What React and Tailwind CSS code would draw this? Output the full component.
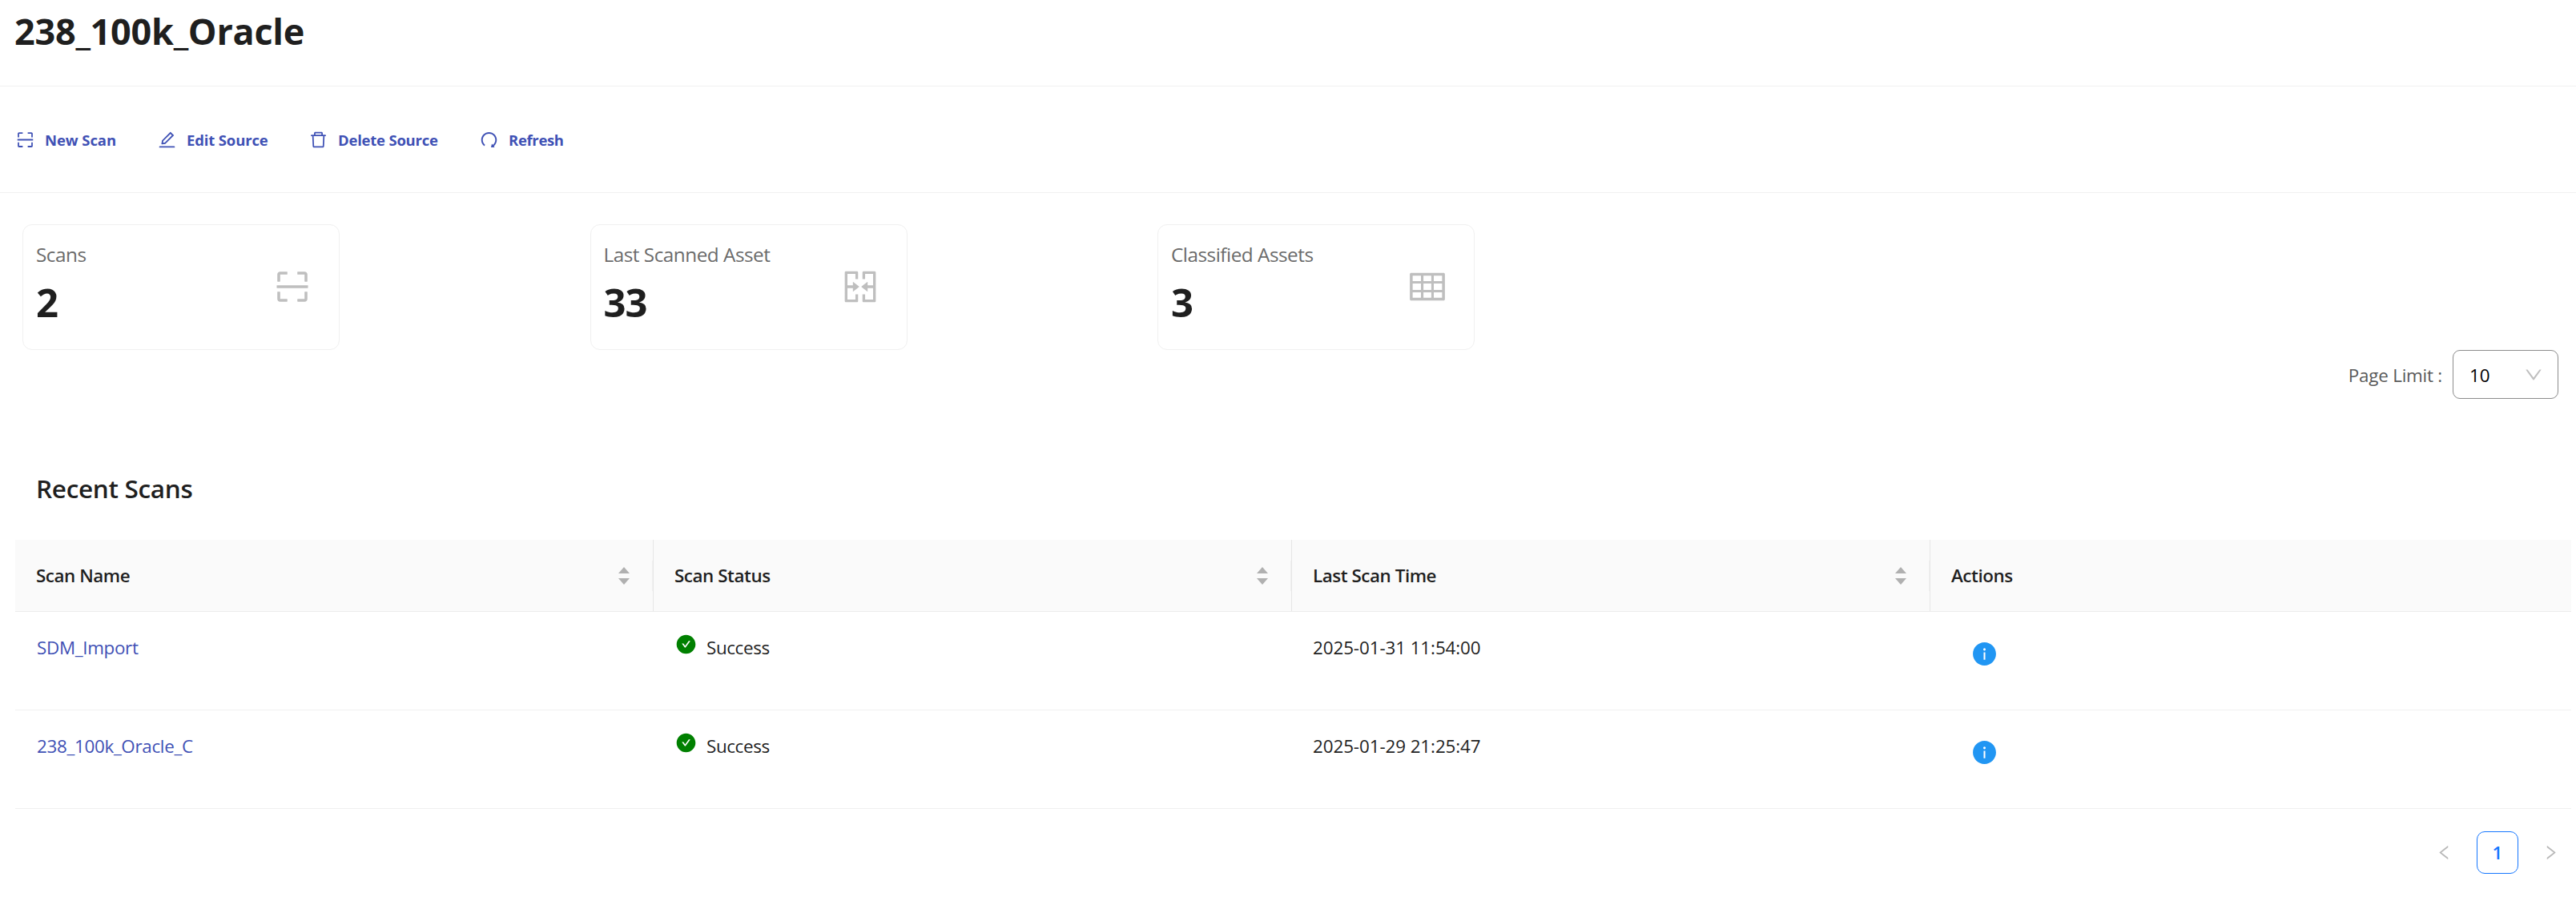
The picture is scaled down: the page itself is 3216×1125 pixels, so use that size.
import React from "react";
import {
  AiOutlineScan,
  AiOutlineEdit,
  AiOutlineDelete,
  AiOutlineRedo,
  AiOutlineMergeCells,
  AiOutlineTable,
  AiFillCheckCircle,
  AiFillInfoCircle,
  AiOutlineDown,
  AiOutlineLeft,
  AiOutlineRight,
} from "react-icons/ai";

const actions = [
  { label: "New Scan", Icon: AiOutlineScan, cls: "w-[177px]", text: "tracking-[-0.004em]" },
  { label: "Edit Source", Icon: AiOutlineEdit, cls: "w-[189px]", text: "tracking-[-0.008em]" },
  { label: "Delete Source", Icon: AiOutlineDelete, cls: "w-[213px]", text: "tracking-[-0.012em]" },
  { label: "Refresh", Icon: AiOutlineRedo, cls: "w-[140px]", text: "tracking-[-0.018em]" },
];

const stats = [
  { label: "Scans", value: "2", Icon: AiOutlineScan },
  { label: "Last Scanned Asset", value: "33", Icon: AiOutlineMergeCells },
  { label: "Classified Assets", value: "3", Icon: AiOutlineTable },
];

const columns = [
  { title: "Scan Name", sortable: true },
  { title: "Scan Status", sortable: true },
  { title: "Last Scan Time", sortable: true },
  { title: "Actions", sortable: false },
];

const rows = [
  { name: "SDM_Import", status: "Success", time: "2025-01-31 11:54:00" },
  { name: "238_100k_Oracle_C", status: "Success", time: "2025-01-29 21:25:47" },
];

function Sorter() {
  return (
    <svg viewBox="0 0 14 22" className="h-[22px] w-3.5 shrink-0 fill-[#b0b0b0]">
      <path d="M7 0L14 8H0z" />
      <path d="M0 14H14L7 22z" />
    </svg>
  );
}

function HeaderCell({ title, sortable }) {
  return (
    <div className="flex items-center pl-[26px]">
      <span className="flex-1 font-semibold tracking-[-0.02em]">{title}</span>
      {sortable && (
        <>
          <Sorter />
          <div className="ml-[28px] h-[38px] w-px bg-[#f0f0f0]" />
          <div className="h-full w-px bg-[#e6e6e6]" />
        </>
      )}
    </div>
  );
}

export default function App() {
  return (
    <div className="h-[1125px] w-[3216px] overflow-hidden bg-white font-['Open_Sans','Noto_Sans',sans-serif] text-[22.4px] leading-[34px] text-[#1f1f1f]">
      <header className="h-[108px] border-b border-[#f0f0f0] pl-[18px] pt-[9px]">
        <h1 className="text-[45px] font-bold leading-[60px] tracking-[-0.006em]">238_100k_Oracle</h1>
      </header>

      <nav className="flex h-[133px] items-center border-b border-[#f0f0f0] pl-[19px] text-[18.5px] font-bold text-[#3f51b5]">
        {actions.map(({ label, Icon, cls, text }) => (
          <button key={label} className={`flex shrink-0 items-center gap-3 whitespace-nowrap ${cls}`}>
            <Icon className="size-[25px]" />
            <span className={`pt-0.5 ${text}`}>{label}</span>
          </button>
        ))}
      </nav>

      <section className="grid grid-cols-[repeat(3,396px)] gap-x-[312.5px] pl-7 pt-[39px]">
        {stats.map(({ label, value, Icon }) => (
          <div key={label} className="flex h-[157px] justify-between rounded-xl border border-[#f0f0f0] pl-4 pr-[33px]">
            <div className="pt-[19px]">
              <div className="text-[24.3px] leading-9 tracking-[-0.02em] text-[#6b6b6b]">{label}</div>
              <div className="mt-[11px] text-[49px] font-bold leading-[60px] tracking-[-0.02em]">{value}</div>
            </div>
            <Icon className="mt-[52px] size-[50px] text-[#bfbfbf]" />
          </div>
        ))}
      </section>

      <div className="flex items-center justify-end pr-[22px]">
        <span className="mr-[13px] pt-0.5 tracking-[-0.01em] text-[#595959]">Page Limit :</span>
        <button className="flex h-[61px] w-[132px] items-center justify-between rounded-[9px] border border-[#8c8c8c] pl-5 pr-[17px] text-black">
          <span className="pt-0.5">10</span>
          <AiOutlineDown className="size-[26px] text-[#bfbfbf]" />
        </button>
      </div>

      <h2 className="ml-[45px] mt-[92px] h-[84px] text-[31.5px] font-semibold leading-10 tracking-[-0.01em]">Recent Scans</h2>

      <div className="ml-[19px] w-[3191px]">
        <div className="grid h-[90px] grid-cols-[797px_797px_797px_800px] border-b border-[#ececec] bg-[#fafafa]">
          {columns.map((c) => (
            <HeaderCell key={c.title} {...c} />
          ))}
        </div>
        {rows.map((r) => (
          <div key={r.name} className="grid h-[123px] grid-cols-[797px_797px_797px_800px] border-b border-[#f0f0f0] pt-7">
            <a className="pl-[27px] tracking-[-0.014em] text-[#3f51b5]">{r.name}</a>
            <div className="flex items-start pl-[27px]">
              <AiFillCheckCircle className="-mt-px size-[27px] text-[#008000]" />
              <span className="ml-3 tracking-[-0.017em]">{r.status}</span>
            </div>
            <div className="pl-[26px] tracking-[-0.004em]">{r.time}</div>
            <div className="pl-[51px] pt-2">
              <AiFillInfoCircle className="size-[33px] text-[#2196f3]" />
            </div>
          </div>
        ))}
      </div>

      <div className="flex items-center justify-end pr-5 pt-7 text-[#b8b8b8]">
        <AiOutlineLeft className="size-[23px]" />
        <span className="mx-[29px] flex h-[53px] w-[52px] items-center justify-center rounded-[10px] border border-[#1677ff] font-semibold text-[#1677ff]">1</span>
        <AiOutlineRight className="size-[23px]" />
      </div>
    </div>
  );
}
